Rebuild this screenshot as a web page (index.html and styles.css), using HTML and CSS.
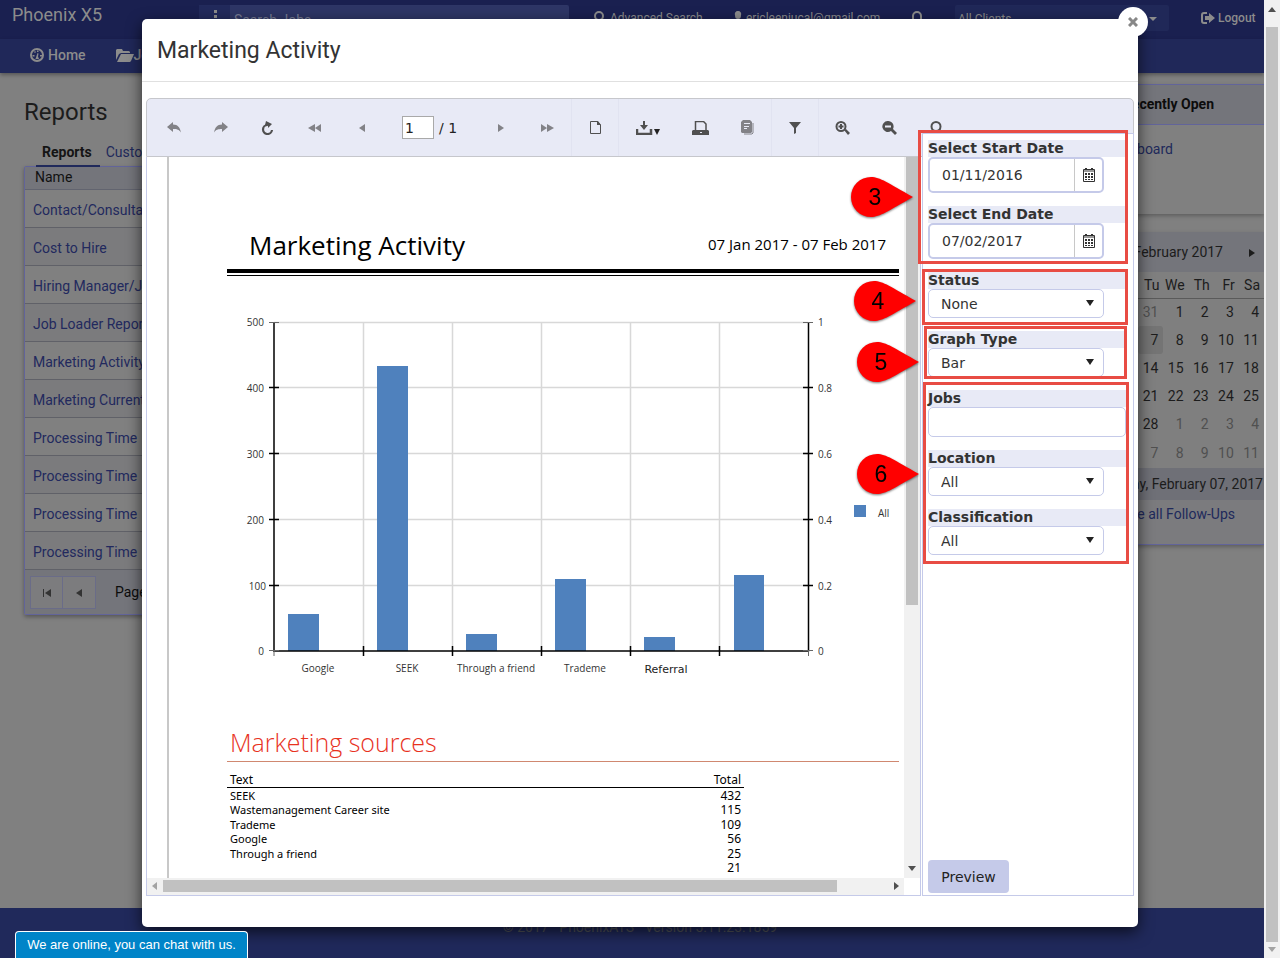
FILE: index.html
```html
<!DOCTYPE html>
<html lang="en">
<head>
<meta charset="utf-8">
<title>Phoenix X5 - Marketing Activity</title>
<link rel="stylesheet" href="styles.css">
</head>
<body>
<div class="app">
  <header class="topbar">
    <a class="brand" href="#">Phoenix X5</a>
    <div class="search"><button class="search-menu" aria-label="Search options"><svg width="4" height="14"><path d="M1 1h3v3H1zM1 6h3v3H1zM1 11h3v3H1z"/></svg></button><input aria-label="Search jobs" placeholder="Search Jobs"></div>
    <a class="toplink" href="#"><svg width="14" height="14" viewBox="0 0 14 14"><circle cx="6" cy="5" r="4" fill="none" stroke="currentColor" stroke-width="2"/><path d="M9 8l4 4" stroke="currentColor" stroke-width="2"/></svg>Advanced Search</a>
    <a class="toplink" href="#"><svg width="10" height="14" viewBox="0 0 10 14"><path d="M5 0a3 3 0 0 1 3 4c0 3-1 4-3 4S2 7 2 4a3 3 0 0 1 3-4zM0 14c0-4 2-5 5-5s5 1 5 5z"/></svg>ericleenjucal@gmail.com</a>
    <a class="toplink" href="#" aria-label="Notifications"><svg width="12" height="14" viewBox="0 0 12 14"><path d="M2 11V5a4 4 0 0 1 8 0v6M0 11h12" fill="none" stroke="currentColor" stroke-width="2"/></svg></a>
    <div class="client"><select aria-label="Client"><option>All Clients</option></select></div>
    <a class="toplink logout" href="#"><svg width="14" height="12" viewBox="0 0 14 12"><path d="M6 1H3a2 2 0 0 0-2 2v6a2 2 0 0 0 2 2h3" fill="none" stroke="currentColor" stroke-width="2"/><path d="M4 4h4V1l6 5-6 5V8H4z"/></svg>Logout</a>
  </header>
  <nav class="mainnav">
    <a href="#"><svg width="15" height="15" viewBox="0 0 15 15"><circle cx="7" cy="7" r="6" fill="none" stroke="currentColor" stroke-width="2"/><path d="M5.500 11l2-6 1 .5-.5 3 1 2.500zM2.500 7h2v1.500h-2zM4 4l1-1 1 1-1 1zM10 7h2v1.500h-2zM7 2.500h1.500V4H7z"/></svg>Home</a>
    <a class="jobs-link" href="#"><svg width="18" height="13" viewBox="0 0 18 13"><path d="M0 11V1l1-1h5l1 2h6l1 1v1H5L3 5zM1 13l4-8h13l-3 7-1 1z"/></svg>Jobs</a>
  </nav>
  <main class="content">
    <section class="reports">
      <h1>Reports</h1>
      <div class="tabs"><a class="active" href="#">Reports</a><a href="#">Custom Reports</a></div>
      <div class="grid">
        <div class="grid-head">Name</div>
        <a href="#">Contact/Consultant Activity</a>
        <a href="#">Cost to Hire</a>
        <a href="#">Hiring Manager/Job Activity</a>
        <a href="#">Job Loader Report</a>
        <a href="#">Marketing Activity</a>
        <a href="#">Marketing Current</a>
        <a href="#">Processing Time</a>
        <a href="#">Processing Time</a>
        <a href="#">Processing Time</a>
        <a href="#">Processing Time</a>
        <div class="pager"><button aria-label="First page"><svg width="8" height="8"><path d="M0 0h1v8H0zM8 0v8L2 4z"/></svg></button><button aria-label="Previous page"><svg width="6" height="8"><path d="M6 0v8L0 4z"/></svg></button><span>Page</span></div>
      </div>
    </section>
    <aside class="side">
      <section class="recent"><h2>Recently Open</h2><a href="#">Dashboard</a></section>
      <section class="calendar">
        <div class="month"><span>February 2017</span><button aria-label="Next month"><svg width="6" height="8"><path d="M0 0l6 4-6 4z"/></svg></button></div>
        <table>
          <thead><tr><th>Su</th><th>Mo</th><th>Tu</th><th>We</th><th>Th</th><th>Fr</th><th>Sa</th></tr></thead>
          <tbody>
            <tr><td class="out">29</td><td class="out">30</td><td class="out">31</td><td>1</td><td>2</td><td>3</td><td>4</td></tr>
            <tr><td>5</td><td>6</td><td class="today">7</td><td>8</td><td>9</td><td>10</td><td>11</td></tr>
            <tr><td>12</td><td>13</td><td>14</td><td>15</td><td>16</td><td>17</td><td>18</td></tr>
            <tr><td>19</td><td>20</td><td>21</td><td>22</td><td>23</td><td>24</td><td>25</td></tr>
            <tr><td>26</td><td>27</td><td>28</td><td class="out">1</td><td class="out">2</td><td class="out">3</td><td class="out">4</td></tr>
            <tr><td class="out">5</td><td class="out">6</td><td class="out">7</td><td class="out">8</td><td class="out">9</td><td class="out">10</td><td class="out">11</td></tr>
          </tbody>
        </table>
        <div class="date">Tuesday, February 07, 2017</div>
        <a class="follow" href="#">See all Follow-Ups</a>
      </section>
    </aside>
  </main>
  <footer class="footer">© 2017 · PhoenixATS · Version 5.11.23.1859</footer>
</div>
<div class="winscroll"><svg width="8" height="5"><path d="M0 5l4-5 4 5z" fill="#505050"/></svg><i></i><svg width="8" height="5"><path d="M0 0h8L4 5z" fill="#a3a3a3"/></svg></div>

<div class="modal" role="dialog" aria-labelledby="dlg">
  <button class="close" aria-label="Close"><svg width="10" height="10" viewBox="0 0 10 10"><path d="M1 1l8 8M9 1l-8 8" stroke="#888" stroke-width="3"/></svg></button>
  <h2 class="modal-title" id="dlg">Marketing Activity</h2>
  <div class="viewer">
    <div class="toolbar">
      <button class="off" aria-label="Back"><svg width="14" height="11" viewBox="0 0 14 11"><path d="M6 0v2.500c5 0 7 3 8 8-2-3-4-3.500-8-3.500v3L0 5z"/></svg></button>
      <button class="off" aria-label="Forward"><svg width="14" height="11" viewBox="0 0 14 11"><path d="M8 0v2.500C3 2.500 1 5.500 0 10.500c2-3 4-3.500 8-3.500v3l6-5z"/></svg></button>
      <button aria-label="Refresh"><svg width="13" height="14" viewBox="0 0 13 14"><path d="M6.500 4A4.500 4.500 0 1 0 11 9" fill="none" stroke="currentColor" stroke-width="2.200"/><path d="M5 0l6 3-4 4V5L4 4z"/></svg></button>
      <button class="off" aria-label="First"><svg width="13" height="8"><path d="M7 0v8L0 4zM13 0v8L7 4z"/></svg></button>
      <button class="off" aria-label="Previous"><svg width="6" height="8"><path d="M6 0v8L0 4z"/></svg></button>
      <div class="pageno"><input aria-label="Page number" value="1"><span>/ 1</span></div>
      <button class="off" aria-label="Next"><svg width="6" height="8"><path d="M0 0l6 4-6 4z"/></svg></button>
      <button class="off" aria-label="Last"><svg width="13" height="8"><path d="M0 0l6 4-6 4zM6 0l7 4-7 4z"/></svg></button>
      <button class="boxed" aria-label="Print preview"><svg width="11" height="13" viewBox="0 0 11 13"><path d="M.5.500h7L10.500 4v8.500H.500z" fill="none" stroke="currentColor"/><path d="M7 0v4h4L8 0z"/></svg></button>
      <button class="export" aria-label="Export"><svg width="24" height="14" viewBox="0 0 24 14"><path d="M1 8v5h14V8" fill="none" stroke="currentColor" stroke-width="2.500"/><path d="M7 0h2v4h3L8 9 4 4h3z"/><path d="M18 8h6l-3 6z" fill="#222"/></svg></button>
      <button aria-label="Print"><svg width="17" height="14" viewBox="0 0 17 14"><path d="M3.500 9V.500h8L14 3v6" fill="none" stroke="currentColor" stroke-width="1.500"/><path d="M0 14v-4l1-1h15l1 1v4zM8 11v1h2v-1z" fill-rule="evenodd"/></svg></button>
      <button class="off" aria-label="Document map"><svg width="13" height="15" viewBox="0 0 13 15"><path d="M2 0h7l2 2v10l-1 1H1l-1-1V2zM3 3v1h6V3zM3 6v1h5V6zM3 8v1h3V8z" fill-rule="evenodd"/><path d="M12 3v10l-1 1H3" fill="none" stroke="currentColor"/></svg></button>
      <button class="boxed" aria-label="Parameters"><svg width="12" height="12"><path d="M0 0h12L7 6v5l-2 1V6z"/></svg></button>
      <button aria-label="Zoom in"><svg width="15" height="14" viewBox="0 0 15 14"><circle cx="6" cy="5.500" r="4.500" fill="none" stroke="currentColor" stroke-width="2"/><path d="M5 3h2v5H5zM3.500 4.500h5v2h-5zM9 9l2-1 4 4-2 2z"/></svg></button>
      <button aria-label="Zoom out"><svg width="15" height="14" viewBox="0 0 15 14"><path d="M6 0a5.500 5.500 0 0 1 5 8l4 4-2 2-4-4A5.500 5.500 0 1 1 6 0zM3 4.500v2h6v-2z" fill-rule="evenodd"/></svg></button>
      <button aria-label="Zoom to page"><svg width="15" height="14" viewBox="0 0 15 14"><circle cx="7" cy="5.500" r="4.500" fill="none" stroke="currentColor" stroke-width="2"/><path d="M9 9l2-1 4 4-2 2z"/></svg></button>
    </div>
    <div class="docpane">
      <div class="doc">
        <div class="sheet">
          <header class="sheet-head"><h3>Marketing Activity</h3><span>07 Jan 2017 - 07 Feb 2017</span></header>
          <svg class="chart" width="672" height="415" viewBox="227 276 672 414" role="img" aria-label="Applicants by marketing source">
            <path class="gridline" d="M274 322.500h534M274 387.500h534M274 453.500h534M274 519.500h534M274 585.500h534M363.500 322v329M452.500 322v329M541.500 322v329M630.500 322v329M719.500 322v329"/>
            <path class="bar" d="M288 651v-37h31v37zM377 651V366h31v285zM466 651v-17h31v17zM555 651v-72h31v72zM644 651v-14h31v14zM734 651v-76h30v76z"/>
            <path class="axis" d="M274 322v329.500M808.500 322v329.500M273 651h536M269 387.500h10M269 453.500h10M269 519.500h10M269 585.500h10M803 387.500h10M803 453.500h10M803 519.500h10M803 585.500h10M363.500 646v10M452.500 646v10M541.500 646v10M630.500 646v10M719.500 646v10"/>
            <path class="thin" d="M269 322.500h10M803 322.500h10M269 650.500h10M803 650.500h10M274 651v5M808.500 651v5"/>
            <g text-anchor="end"><text x="264" y="326">500</text><text x="264" y="392">400</text><text x="264" y="458">300</text><text x="264" y="524">200</text><text x="266" y="590">100</text><text x="264" y="655">0</text></g>
            <g><text x="818" y="326">1</text><text x="818" y="392">0.8</text><text x="818" y="458">0.6</text><text x="818" y="524">0.4</text><text x="818" y="590">0.2</text><text x="818" y="655">0</text><text x="878" y="517">All</text></g>
            <g text-anchor="middle"><text x="318" y="672">Google</text><text x="407" y="672">SEEK</text><text x="496" y="672">Through a friend</text><text x="585" y="672">Trademe</text><text class="ref" x="666" y="673">Referral</text></g>
            <path class="bar" d="M854 505h12v12h-12z"/>
          </svg>
          <h4>Marketing sources</h4>
          <table class="sources">
            <thead><tr><th>Text</th><th>Total</th></tr></thead>
            <tbody>
              <tr><td>SEEK</td><td>432</td></tr>
              <tr><td>Wastemanagement Career site</td><td>115</td></tr>
              <tr><td>Trademe</td><td>109</td></tr>
              <tr><td>Google</td><td>56</td></tr>
              <tr><td>Through a friend</td><td>25</td></tr>
              <tr><td></td><td>21</td></tr>
            </tbody>
          </table>
        </div>
      </div>
      <div class="vscroll"><i></i><svg width="8" height="5"><path d="M0 0h8L4 5z"/></svg></div>
      <div class="hscroll"><svg width="5" height="8"><path d="M5 0v8L0 4z" fill="#a3a3a3"/></svg><div><i></i></div><svg width="5" height="8"><path d="M0 0l5 4-5 4z"/></svg></div>
    </div>
    <form class="params">
      <div class="field"><label for="sd">Select Start Date</label><div class="datebox"><input id="sd" value="01/11/2016"><button type="button" aria-label="Open calendar"><svg width="12" height="14" viewBox="0 0 12 14"><path d="M.5 1.500h11v12H.500zM0 3h12" fill="none" stroke="#333"/><path d="M2 0h2v2H2zM8 0h2v2H8zM2 5h2v2H2zM5 5h2v2H5zM8 5h2v2H8zM2 8h2v2H2zM5 8h2v2H5zM8 8h2v2H8zM2 11h2v1H2zM5 11h2v1H5zM8 11h2v1H8z"/></svg></button></div></div>
      <div class="field"><label for="ed">Select End Date</label><div class="datebox"><input id="ed" value="07/02/2017"><button type="button" aria-label="Open calendar"><svg width="12" height="14" viewBox="0 0 12 14"><path d="M.5 1.500h11v12H.500zM0 3h12" fill="none" stroke="#333"/><path d="M2 0h2v2H2zM8 0h2v2H8zM2 5h2v2H2zM5 5h2v2H5zM8 5h2v2H8zM2 8h2v2H2zM5 8h2v2H5zM8 8h2v2H8zM2 11h2v1H2zM5 11h2v1H5zM8 11h2v1H8z"/></svg></button></div></div>
      <div class="field"><label for="st">Status</label><div class="drop"><select id="st"><option>None</option></select></div></div>
      <div class="field"><label for="gt">Graph Type</label><div class="drop"><select id="gt"><option>Bar</option></select></div></div>
      <div class="field"><label for="jb">Jobs</label><input class="jobs" id="jb"></div>
      <div class="field"><label for="lo">Location</label><div class="drop"><select id="lo"><option>All</option></select></div></div>
      <div class="field"><label for="cl">Classification</label><div class="drop"><select id="cl"><option>All</option></select></div></div>
      <button class="preview" type="button">Preview</button>
    </form>
  </div>
  <div class="mark m3"></div><div class="mark m4"></div><div class="mark m5"></div><div class="mark m6"></div>
  <svg class="pin p3" width="64" height="42" viewBox="0 0 64 42"><path d="M21 1C30 1 38 7 63 21 38 35 30 41 21 41a20 20 0 0 1 0-40z"/><text x="25" y="29">3</text></svg>
  <svg class="pin p4" width="64" height="42" viewBox="0 0 64 42"><path d="M21 1C30 1 38 7 63 21 38 35 30 41 21 41a20 20 0 0 1 0-40z"/><text x="25" y="29">4</text></svg>
  <svg class="pin p5" width="64" height="42" viewBox="0 0 64 42"><path d="M21 1C30 1 38 7 63 21 38 35 30 41 21 41a20 20 0 0 1 0-40z"/><text x="25" y="29">5</text></svg>
  <svg class="pin p6" width="64" height="42" viewBox="0 0 64 42"><path d="M21 1C30 1 38 7 63 21 38 35 30 41 21 41a20 20 0 0 1 0-40z"/><text x="25" y="29">6</text></svg>
</div>
<button class="chat">We are online, you can chat with us.</button>
</body>
</html>
```
FILE: styles.css
```css
* { box-sizing: border-box; }
body { margin: 0; height: 100vh; display: flex; overflow: hidden; position: relative; font: 14px/20px Roboto, "Liberation Sans", sans-serif; background: #808080; color: #1c1c1c; }
a { color: #20295b; text-decoration: none; }
h1, h2, h3, h4 { margin: 0; font-weight: 400; }
button, input, select { font: inherit; color: inherit; margin: 0; padding: 0; border: 0; background: none; border-radius: 0; outline: 0; }
select { appearance: none; width: 100%; }
svg { fill: currentColor; flex: none; }

.app { flex: 1; min-width: 0; display: flex; flex-direction: column; }
.topbar { height: 39px; background: #1a2050; color: #8c8c8c; display: grid; grid-template-columns: 187px 1fr 140px 178px 44px 246px 63px; align-items: center; padding: 0 0 3px 12px; font-size: 12px; }
.brand { color: #8c8c8c; font-size: 18px; height: 26px; line-height: 20px; }
.search { display: flex; height: 26px; margin-right: 24px; background: #2e3666; border-radius: 2px; font-size: 14px; }
.search-menu { width: 31px; background: #222a5c; }
.search input { flex: 1; padding: 3px 0 0 4px; min-width: 0; }
.search input::placeholder { color: #777c94; opacity: 1; }
.toplink { display: flex; align-items: center; gap: 3px; color: #8c8c8c; }
.client { width: 214px; height: 26px; background: #202858; border-radius: 2px; position: relative; }
.client select { height: 26px; padding: 2px 0 0 3px; }
.client::after { content: ""; position: absolute; right: 12px; top: 12px; border: 4px solid transparent; border-top-color: #8c8c8c; border-bottom: 0; }
.logout { font-weight: 500; }
.mainnav { height: 34px; background: #202859; display: flex; align-items: center; gap: 30px; padding: 0 0 2px 30px; box-shadow: 0 2px 4px #0005; }
.mainnav a { display: flex; align-items: center; gap: 3px; color: #8c8c8c; font-weight: 500; }
.mainnav .jobs-link { gap: 0; }

.content { flex: 1; display: flex; justify-content: space-between; }
.reports { width: 700px; padding: 25px 0 0 24px; }
.reports h1 { font-size: 24px; line-height: 28px; }
.tabs { display: flex; padding: 16px 0 0 12px; }
.tabs a { height: 25px; padding: 0 6px 3px; line-height: 21px; border-bottom: 2px solid transparent; }
.tabs .active { font-weight: 700; color: #141414; border-color: #20295b; padding-right: 8px; }
.tabs a + a { padding-left: 0; margin-left: 6px; }
.grid { border: 1px solid #62649a; border-radius: 2px; box-shadow: 0 2px 4px #0005; margin-top: -1px; }
.grid-head { height: 23px; line-height: 21px; padding-left: 10px; background: #74757b; border-bottom: 1px solid #62646f; color: #111; }
.grid a { display: block; height: 38px; line-height: 40px; padding-left: 8px; border-bottom: 1px solid #606168; color: #22295e; }
.grid a:nth-of-type(even) { background: #7b7b7d; }
.pager { display: flex; align-items: center; height: 44px; background: #74757b; padding-left: 5px; color: #0c0c0c; }
.pager button { width: 33px; height: 33px; border: 1px solid #6a6c88; background: #7c7c7e; color: #333; }
.pager button + button { border-left: 0; }
.pager span { padding-left: 19px; }

.side { width: 190px; padding-top: 11px; }
.side section { box-shadow: 0 2px 4px #0004; }
.recent { height: 130px; margin-bottom: 18px; text-align: right; border-top: 1px solid #62649a; }
.recent h2 { height: 40px; line-height: 38px; background: #74757b; border-bottom: 1px solid #62649a; font-size: 14px; font-weight: 700; color: #0c0c0c; padding-right: 50px; }
.recent a { display: block; padding: 14px 91px 0 0; }
.calendar { background: #7b7b7e; border-bottom: 1px solid #62649a; text-align: right; height: 313px; }
.month { display: flex; justify-content: flex-end; align-items: center; gap: 26px; height: 40px; background: #74757b; padding-right: 9px; }
.calendar table { width: 176px; margin-left: auto; border-collapse: collapse; table-layout: fixed; background: #7f7f7f; }
.calendar th, .calendar td { padding: 0 5px 0 0; height: 28px; font-weight: 400; text-align: right; width: 25px; }
.calendar th { height: 26px; border-bottom: 1px solid #5a5a5a; padding-right: 4px; }
.calendar tr:last-child td { height: 30px; }
.calendar .out { color: #505050; }
.calendar .today { background: #747474; border-radius: 3px; }
.date { height: 32px; line-height: 32px; background: #6f7077; padding-right: 1px; white-space: nowrap; }
.follow { display: block; padding: 4px 29px 0 0; }
.footer { height: 50px; background: #20295b; color: #50535a; line-height: 39px; text-align: center; padding-left: 16px; }

.winscroll { width: 16px; background: #f1f1f1; display: flex; flex-direction: column; align-items: center; justify-content: space-between; padding: 7px 0 6px; }
.winscroll i { flex: 1; width: 12px; background: #c1c1c1; margin: 15px 0 5px; }

.modal { position: absolute; left: 142px; right: 142px; top: 19px; bottom: 31px; background: #fff; border-radius: 5px; box-shadow: 0 5px 15px #000a; display: flex; flex-direction: column; }
.close { position: absolute; right: -10px; top: -12px; width: 30px; height: 30px; border-radius: 50%; background: #fff; display: grid; place-items: center; }
.modal-title { height: 63px; line-height: 63px; padding-left: 15px; font-size: 23px; color: #333; border-bottom: 1px solid #e0e0e0; }
.viewer { flex: 1; min-height: 0; margin: 16px 4px 31px; display: grid; grid-template: 59px 1fr / 1fr 212px; font-family: "DejaVu Sans", sans-serif; }
.toolbar { grid-column: 1 / 3; background: #e8eaf6; border: 1px solid #c6c7cc; border-radius: 5px 5px 0 0; display: flex; align-items: stretch; padding-left: 3px; color: #505050; }
.toolbar button { width: 47px; flex: none; display: grid; place-items: center; }
.toolbar .off { color: #828287; }
.toolbar .boxed { width: 48px; border: solid #e1e3f1; border-width: 0 1px; }
.toolbar .export { width: 58px; }
.pageno { width: 92px; flex: none; display: flex; align-items: center; gap: 5px; padding-left: 17px; color: #222; }
.pageno input { width: 32px; height: 23px; border: 1px solid #a9a9a9; background: #fff; padding-left: 2px; }

.docpane { display: grid; grid-template: 1fr 17px / 1fr 16px; min-height: 0; min-width: 0; border: 1px solid #c5cae9; border-top: 0; margin-right: 1px; }
.doc { overflow: hidden; border-left: 2px solid #c8c8c8; margin-left: 20px; font-family: "Noto Sans", "Open Sans", sans-serif; color: #000; min-height: 0; }
.sheet { width: 730px; padding: 67px 0 0 58px; }
.sheet-head { display: flex; justify-content: space-between; width: 672px; height: 49px; padding: 0 13px 0 22px; border-bottom: 4px solid #000; }
.sheet-head h3 { font: 400 26px/42px "Open Sans", "Noto Sans", sans-serif; }
.sheet-head span { font: 15px/40px "Open Sans", "Noto Sans", sans-serif; }
.chart { display: block; border-top: 1px solid #000; margin-top: 2px; }
.chart text { font: 10px "Open Sans", "Noto Sans", sans-serif; fill: #333; }
.chart .ref { font: 11px "DejaVu Sans", sans-serif; fill: #222; }
.gridline { stroke: #d8d8d8; stroke-width: 1.5; fill: none; }
.bar { fill: #4f81bd; }
.axis { stroke: #000; stroke-width: 1.5; fill: none; }
.thin { stroke: #666; fill: none; }
.sheet h4 { width: 672px; height: 72px; padding: 33px 0 0 3px; font: 300 25px/38px "Open Sans", "Noto Sans", sans-serif; color: #e8321e; border-bottom: 1px solid #d08870; }
.sources { width: 517px; margin-top: 10px; border-collapse: separate; border-spacing: 0; font: 11px/14px "Noto Sans", sans-serif; table-layout: fixed; }
.sources th { font-weight: 400; font-size: 12px; text-align: left; height: 16px; padding: 0 3px; border-bottom: 1px solid #000; }
.sources th:first-child { width: 362px; }
.sources td { height: 15px; padding: 0 3px; }
.sources tr:nth-child(even) td { height: 14px; }
.sources td:last-child, .sources th:last-child { text-align: right; }
.sources td:last-child { font-size: 12px; }
.vscroll { background: #f1f1f1; display: flex; flex-direction: column; align-items: center; justify-content: space-between; padding-bottom: 7px; color: #505050; }
.vscroll i { width: 12px; height: 448px; background: #c1c1c1; }
.hscroll { background: #f1f1f1; display: flex; align-items: center; padding: 0 5px 2px; color: #505050; }
.hscroll div { flex: 1; margin: 0 6px; }
.hscroll i { display: block; height: 12px; width: 93%; background: #c1c1c1; }

.params { position: relative; margin-top: -24px; background: #fff; border: 1px solid #c5cae9; padding: 6px 7px 2px 5px; display: flex; flex-direction: column; gap: 13px; color: #333; min-height: 0; }
.field label { display: block; height: 17px; line-height: 17px; background: #e8eaf6; font-weight: 700; }
.datebox { display: flex; width: 176px; height: 36px; border: 2px solid #c5cae9; border-radius: 5px; }
.datebox input { flex: 1; min-width: 0; padding-left: 12px; }
.datebox button { width: 28px; border-left: 1px solid #c8c8c8; display: grid; place-items: center; }
.drop { position: relative; width: 176px; }
.drop select { display: block; height: 29px; border: 1px solid #c5cae9; border-radius: 5px; padding-left: 12px; }
.drop::after { content: ""; position: absolute; right: 10px; top: 11px; border: 4px solid transparent; border-top: 6px solid #222; border-bottom: 0; }
.jobs { display: block; width: 100%; height: 30px; border: 1px solid #c5cae9; border-radius: 5px; padding: 0 8px; }
.preview { margin-top: auto; width: 81px; height: 33px; background: #c5cae9; border-radius: 4px; color: #222; }

.mark { position: absolute; border: 3px solid #e84c44; pointer-events: none; }
.m3 { right: 10px; top: 111px; width: 210px; height: 134px; }
.m4 { right: 10px; top: 250px; width: 206px; height: 56px; }
.m5 { right: 11px; top: 307px; width: 203px; height: 53px; }
.m6 { right: 9px; top: 363px; width: 206px; height: 182px; }
.pin { position: absolute; fill: #f00; filter: drop-shadow(0 1px 1px #0008); }
.pin text { font: 23px "Liberation Sans", sans-serif; fill: #000; text-anchor: middle; }
.p3 { right: 224px; top: 157px; }
.p4 { right: 221px; top: 261px; }
.p5 { right: 218px; top: 322px; }
.p6 { right: 218px; top: 434px; }
.chat { position: absolute; left: 15px; bottom: 0; width: 233px; height: 27px; background: #0084c8; border: 1px solid #fff; border-bottom: 0; border-radius: 4px 4px 0 0; color: #fff; font: 13px/26px "Liberation Sans", sans-serif; white-space: nowrap; }
```
